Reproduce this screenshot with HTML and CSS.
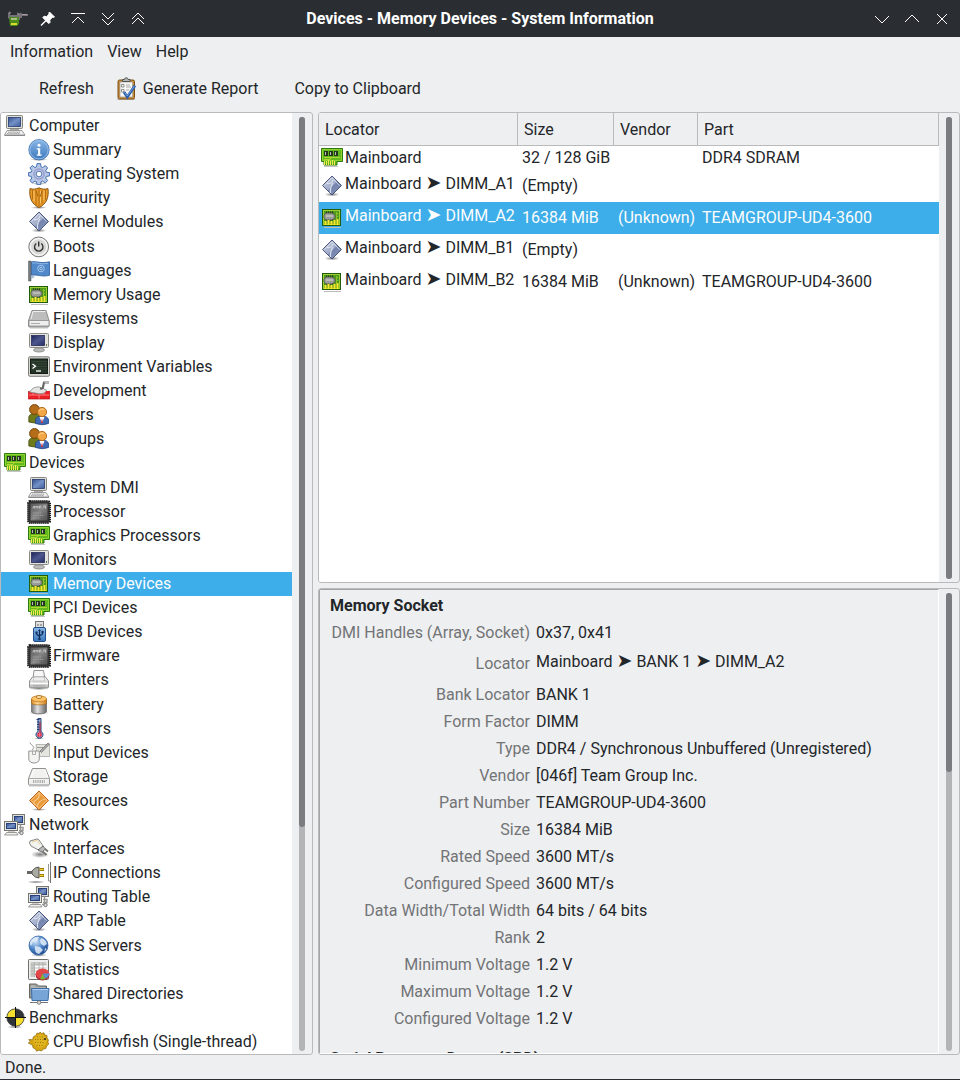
FILE: index.html
```html
<!DOCTYPE html>
<html lang="en">
<head>
<meta charset="utf-8">
<title>Devices - Memory Devices - System Information</title>
<link rel="stylesheet" href="styles.css">
</head>
<body>
<svg class="sprite" width="0" height="0" aria-hidden="true">
  <defs>
    <linearGradient id="g-screen" x1="0" y1="0" x2="1" y2="1"><stop offset="0" stop-color="#34508f"/><stop offset=".5" stop-color="#7391c6"/><stop offset="1" stop-color="#3f5b9b"/></linearGradient>
    <linearGradient id="g-dark" x1="0" y1="0" x2="1" y2="1"><stop offset="0" stop-color="#1d2457"/><stop offset=".5" stop-color="#4d588f"/><stop offset="1" stop-color="#252c66"/></linearGradient>
    <linearGradient id="g-silver" x1="0" y1="0" x2="0" y2="1"><stop offset="0" stop-color="#fafafa"/><stop offset="1" stop-color="#b9bab8"/></linearGradient>
    <linearGradient id="g-blue" x1="0" y1="0" x2="0" y2="1"><stop offset="0" stop-color="#8bb7e6"/><stop offset="1" stop-color="#3b78bd"/></linearGradient>
    <linearGradient id="g-diamond" x1="0" y1="0" x2="1" y2="1"><stop offset="0" stop-color="#c9d0e2"/><stop offset=".5" stop-color="#a3aecb"/><stop offset=".55" stop-color="#7484ad"/><stop offset="1" stop-color="#8997ba"/></linearGradient>
    <linearGradient id="g-metal" x1="0" y1="0" x2="1" y2="0"><stop offset="0" stop-color="#777"/><stop offset=".4" stop-color="#e0e0e0"/><stop offset="1" stop-color="#666"/></linearGradient>
    <linearGradient id="g-gold" x1="0" y1="0" x2="1" y2="0"><stop offset="0" stop-color="#d98b22"/><stop offset=".4" stop-color="#ffd894"/><stop offset="1" stop-color="#cf7f18"/></linearGradient>
    <linearGradient id="g-chip" x1="0" y1="0" x2="1" y2="1"><stop offset="0" stop-color="#555"/><stop offset=".5" stop-color="#858585"/><stop offset="1" stop-color="#4b4b4b"/></linearGradient>
    <radialGradient id="g-globe" cx=".35" cy=".3" r=".8"><stop offset="0" stop-color="#cfe2f6"/><stop offset=".5" stop-color="#4c86c8"/><stop offset="1" stop-color="#173f7f"/></radialGradient>
    <radialGradient id="g-shadow"><stop offset="0" stop-color="#000" stop-opacity=".5"/><stop offset="1" stop-color="#000" stop-opacity="0"/></radialGradient>
  </defs>
  <symbol id="i-computer" viewBox="0 0 22 22">
    <rect x="2.500" y=".5" width="16" height="13" rx="1" fill="#deded9" stroke="#85867f"/>
    <rect x="4.500" y="2.500" width="12" height="9" fill="url(#g-screen)" stroke="#24386f" stroke-width=".8"/>
    <path d="M6 14h9v2H6z" fill="#aaa"/>
    <path d="M3 15.500h15l3 4.500H.5z" fill="#eee" stroke="#888" stroke-width=".8"/>
    <path d="M4 17.200h12M3 18.700h13" stroke="#999" stroke-dasharray="1.500 .6"/>
    <path d="M.5 20.500h20.500" stroke="#777" stroke-width=".8"/>
  </symbol>
  <symbol id="i-info" viewBox="0 0 22 22">
    <ellipse cx="11" cy="20.500" rx="9" ry="1.500" fill="url(#g-shadow)"/>
    <circle cx="11" cy="10.700" r="10.200" fill="url(#g-blue)" stroke="#3c6fae" stroke-width=".8"/>
    <circle cx="11" cy="10.700" r="9.200" fill="none" stroke="#a5c8ee" stroke-width=".8"/>
    <circle cx="11" cy="6.300" r="1.500" fill="#fff"/>
    <path d="M8.800 9.200h3.400v6.300h1.400v1.200H8.800v-1.200h1.300v-5H8.800z" fill="#fff"/>
  </symbol>
  <symbol id="i-gear" viewBox="0 0 22 22">
    <ellipse cx="11" cy="20.500" rx="8" ry="1.500" fill="url(#g-shadow)"/>
    <path d="M9 .6h3.600l.4 3.200 1.600.7 2.700-1.900 2.300 2.300-1.900 2.700.7 1.600 3.200.4v3.300l-3.200.5-.7 1.600 1.900 2.600-2.300 2.300-2.700-1.800-1.600.6-.4 3H9l-.5-3-1.500-.6L4.300 20 2 17.700l1.800-2.700-.6-1.600-2.800-.5V9.600l2.800-.4.6-1.600L2 4.900l2.300-2.300L7 4.500l1.500-.7z" fill="#b7c7e5" stroke="#4270b2"/>
    <circle cx="11" cy="11" r="5" fill="none" stroke="#9a9fce" stroke-width="1.500"/>
    <circle cx="11" cy="11" r="2.800" fill="#fff" stroke="#5779b2"/>
  </symbol>
  <symbol id="i-shield" viewBox="0 0 22 22">
    <ellipse cx="11" cy="20.500" rx="8" ry="1.500" fill="url(#g-shadow)"/>
    <path d="M11 .8c3 1.700 6.200 1.600 9 .8 1 8.500-1.200 15.200-9 18.900C3.200 16.800 1 10.100 2 1.600c2.800.8 6 .9 9-.8z" fill="#e89a28" stroke="#8b5410"/>
    <path d="M4.500 3v9.500M8 3v15M11 2v17M14 3.500V17M17.500 3v10" stroke="#a7640d" stroke-width=".8"/>
    <path d="M6 4v10M12.500 4v12M16 4v9" stroke="#ffc665" stroke-width="1"/>
    <path d="M8 4l2 5M14 4l-2 6" stroke="#905510" stroke-width=".8"/>
  </symbol>
  <symbol id="i-diamond" viewBox="0 0 22 22">
    <ellipse cx="11" cy="19.500" rx="7.500" ry="2" fill="url(#g-shadow)"/>
    <path d="M11 1l9.500 9.500L11 20l-9.500-9.500z" fill="url(#g-diamond)" stroke="#3d4b74" stroke-width=".9"/>
    <path d="M11 3l7.500 7.500M11 3l-7.500 7.500" stroke="#e4e8f2" stroke-width=".7"/>
    <path d="M6 8.500c3 .5 4.500 0 6-3.500M12 8c-2 3-3 6-2.500 10" stroke="#dbe1ee" fill="none" stroke-width="1.200"/>
  </symbol>
  <symbol id="i-power" viewBox="0 0 22 22">
    <circle cx="10.700" cy="10.900" r="9.900" fill="#d8d8d6" stroke="#767876"/>
    <circle cx="10.700" cy="10.900" r="8.400" fill="none" stroke="#f6f6f6" stroke-width="1.400"/>
    <path d="M8.300 7.500a4.200 4.200 0 1 0 4.900 0" fill="none" stroke="#333" stroke-width="1.400"/>
    <path d="M10.700 5.500v5" stroke="#333" stroke-width="1.400"/>
  </symbol>
  <symbol id="i-flag" viewBox="0 0 22 22">
    <path d="M3 2c5-1.500 9 2 18.500-.2v13.500c-8 2.200-13-1.600-18.500.2z" fill="#5088c9" stroke="#2b5c9b" stroke-width=".8"/>
    <circle cx="13" cy="8.500" r="3.300" fill="none" stroke="#a5c6eb"/>
    <circle cx="13" cy="8.500" r="1.300" fill="none" stroke="#bed7f1" stroke-width=".8"/>
    <path d="M.5 1h2.500v20H.5z" fill="#777c80" stroke="#505558" stroke-width=".5"/>
    <path d="M4 3c5-1 9 2 16 .3" fill="none" stroke="#8db8e7"/>
    <path d="M3 19l4-2-4-2z" fill="#a9bdd4"/>
  </symbol>
  <symbol id="i-memory" viewBox="0 0 22 22">
    <path d="M3 20.500h17" stroke="#bbb"/>
    <rect x="1.500" y="2.500" width="18" height="16" fill="#4f9a1a" stroke="#215c0c"/>
    <rect x="2.500" y="3.500" width="16" height="14" fill="none" stroke="#9fd033"/>
    <path d="M5 5.500h7M5 12.500h7" stroke="#222c1c" stroke-width="2" stroke-dasharray="1 1"/>
    <path d="M5 6h6l3 2v3l-3 2H5L3 11V8z" fill="#9a9c97" stroke="#4c5546" stroke-width=".8"/>
    <path d="M5 9h7" stroke="#d9dad6"/>
    <path d="M15 6.500h2M15 9.500h2M15.500 5v7" stroke="#87c22c"/>
    <path d="M4.500 14v4M7.500 13v5M10.500 14v4M13.500 13v5M16.500 12v6" stroke="#ffe62c" stroke-width="2"/>
  </symbol>
  <symbol id="i-drive" viewBox="0 0 22 22">
    <path d="M4 2.500h14l3 10v5.500q0 1-1 1H1.500q-1 0-1-1v-5.500z" fill="#bcbdbc" stroke="#858785" stroke-width=".9"/>
    <path d="M1 12.500h20v5.500H1z" fill="#eee" stroke="#8a8c8a" stroke-width=".8"/>
    <path d="M3 11l2-7.500h12.500" stroke="#eee" fill="none"/>
    <path d="M3 15.500h9" stroke="#aaa"/><path d="M2 20h18" stroke="#aaa" stroke-width=".7"/>
  </symbol>
  <symbol id="i-display" viewBox="0 0 22 22">
    <ellipse cx="11" cy="18" rx="5.500" ry="2" fill="#bbbcb9" stroke="#858683" stroke-width=".8"/>
    <rect x="1.500" y="1.500" width="19" height="14" rx="1" fill="#e2e2df" stroke="#8b8c88"/>
    <rect x="3.500" y="3.500" width="13" height="10" fill="url(#g-dark)" stroke="#252b58" stroke-width=".8"/>
    <path d="M18.500 12v2" stroke="#657747"/>
  </symbol>
  <symbol id="i-terminal" viewBox="0 0 22 22">
    <rect x=".5" y=".8" width="21" height="19.500" rx="1.500" fill="#d5d6d1" stroke="#7d7e79"/>
    <rect x="2.500" y="3" width="17" height="14.500" fill="#233225" stroke="#151d17"/>
    <path d="M3 5.500h16M3 8h16M3 10.500h16M3 13h16" stroke="#405140" stroke-width=".7"/>
    <path d="M4.500 8l3 2.300-3 2.300" fill="none" stroke="#fff" stroke-width="1.300"/><path d="M8 15h5" stroke="#fff" stroke-width="1.300"/>
  </symbol>
  <symbol id="i-trowel" viewBox="0 0 22 22">
    <rect x=".3" y="11" width="21.500" height="8" fill="#ec1f24"/>
    <path d="M.3 15h21.500M5 11v4M16 11v4M11 15v4" stroke="#fb8181"/>
    <path d="M.3 11v8h21.500v-8" fill="none" stroke="#b20f16" stroke-width=".7"/>
    <path d="M1.500 12q4-6 10-5l7 3q-1 4-7 3.800z" fill="#e4e5e3" stroke="#888" stroke-width=".8"/>
    <path d="M12 8.500q3 .5 3-1.500l1-4.500h5" fill="none" stroke="#666" stroke-width="2.200"/>
    <path d="M16.500 2.500h4.500" stroke="#bbb"/>
  </symbol>
  <symbol id="i-users" viewBox="0 0 22 22">
    <path d="M.8 18V13q.5-3.500 6-3.500t6 3.500v5q-6 2-12 0z" fill="#6f7b1b" stroke="#48500e" stroke-width=".8"/>
    <circle cx="6.500" cy="5.500" r="4.900" fill="#b46d18" stroke="#754409"/>
    <path d="M7.500 19.500v-4q1-3.500 6.500-3.500t6.500 3.500v4q-6 2.500-13 0z" fill="#3e69b5" stroke="#24447f" stroke-width=".8"/>
    <path d="M11.500 13l2.500 6 2.500-6z" fill="#fff"/><path d="M14 14l-1 5h2z" fill="#d22c35"/>
    <circle cx="14" cy="8" r="4.600" fill="#f3a646" stroke="#b36b1c"/>
    <path d="M11 7q2-3 5-1.500" fill="none" stroke="#ffd697"/>
  </symbol>
  <symbol id="i-card" viewBox="0 0 22 22">
    <path d="M.5 1.500h21v13H16V18H3v-3.500H.5z" fill="#62b91d" stroke="#2d790d"/>
    <path d="M1.500 2.500h19v11h-19z" fill="none" stroke="#a4df3b" stroke-width=".7"/>
    <path d="M3 4h4v5H3zM8 4h4v5H8zM13 4h4v5h-4z" fill="#24361e"/>
    <path d="M4.500 5v3M9.500 5v3M14.500 5v3" stroke="#b6bdb4"/>
    <path d="M3 10.500h16M3 12.500h6l1-1.500" stroke="#c8dc34" stroke-width=".8" fill="none"/>
    <path d="M3.500 14v4M5.500 14v4M7.500 13v5M9.500 14v4M11.500 13v5M13.500 14v4" stroke="#f6e850"/>
    <path d="M3 19.500h14" stroke="#aaa" stroke-width=".7"/>
  </symbol>
  <symbol id="i-cpu" viewBox="0 0 24 24">
    <rect x="1.300" y="1.300" width="21.500" height="21.500" rx="2" fill="#444" stroke="#171717" stroke-width="2.500" stroke-dasharray="1.200 .8"/>
    <rect x="3" y="3" width="18" height="18" rx="1.500" fill="url(#g-chip)" stroke="#303030"/>
    <path d="M6 8.500V7l1.500-1v2.500M9 8.500V6l1 1.500L11 6v2.500M12.500 8.500V6h1.500v2.500M16 6h2.500v2.500M16 8.500l2-2" fill="none" stroke="#c5c5c5" stroke-width=".9"/>
    <path d="M6 13h8M6 15.500h10M6 18h7" stroke="#aaa" stroke-width=".8" stroke-dasharray="1.500 .7"/>
  </symbol>
  <symbol id="i-usb" viewBox="0 0 22 22">
    <rect x="7.500" y=".5" width="8" height="7" fill="#e1e1df" stroke="#777"/>
    <path d="M9.500 3h1v2h-1zM12.500 3h1v2h-1z" fill="#666"/>
    <rect x="5.500" y="6.500" width="12" height="14" rx="1.500" fill="url(#g-blue)" stroke="#214f8b"/>
    <path d="M11.500 18V9M8.500 11.500V13l3 2.500M14.500 11v2l-3 2" fill="none" stroke="#112e5d" stroke-width="1.200"/>
    <circle cx="11.500" cy="18" r="1.300" fill="#112e5d"/><path d="M10 10l1.500-2 1.500 2zM7.500 10.500h2v2h-2z" fill="#112e5d"/><circle cx="14.500" cy="11" r="1.200" fill="#112e5d"/>
  </symbol>
  <symbol id="i-printer" viewBox="0 0 22 22">
    <ellipse cx="11" cy="19.500" rx="10" ry="1.600" fill="url(#g-shadow)"/>
    <path d="M5 10l1-8.500h9.500L17 10z" fill="#f7f7f7" stroke="#888" stroke-width=".9"/>
    <path d="M4.500 8h13l3 4v6q0 .8-1 .8h-17q-1 0-1-.8v-6z" fill="url(#g-silver)" stroke="#858683" stroke-width=".9"/>
    <path d="M6 8l-1 4h12l-1-4z" fill="#eee" stroke="#aaa" stroke-width=".6"/>
    <path d="M2 14.500h18" stroke="#fff" stroke-width="1.300"/><path d="M5 16.800h12" stroke="#999" stroke-width=".7"/>
  </symbol>
  <symbol id="i-battery" viewBox="0 0 22 22">
    <ellipse cx="11" cy="18.500" rx="10" ry="2.500" fill="url(#g-shadow)"/>
    <path d="M3.500 5.500v12c0 3 15 3 15 0v-12z" fill="url(#g-metal)" stroke="#666" stroke-width=".7"/>
    <path d="M3.500 5v4c0 2.500 15 2.500 15 0V5z" fill="url(#g-gold)" stroke="#a66b1c" stroke-width=".7"/>
    <ellipse cx="11" cy="4.800" rx="7.500" ry="3" fill="#ffc365" stroke="#b97822" stroke-width=".8"/>
    <ellipse cx="11" cy="3" rx="2.800" ry="1.500" fill="#ffe0a7" stroke="#a66b1c" stroke-width=".8"/>
  </symbol>
  <symbol id="i-thermo" viewBox="0 0 22 22">
    <ellipse cx="11" cy="20.500" rx="5" ry="1" fill="url(#g-shadow)"/>
    <path d="M10 .5h3v13a3.500 3.500 0 1 1-3 0z" fill="#9fb4dc" stroke="#24447b"/>
    <path d="M12 4v11" stroke="#b5213c" stroke-width="1.200"/>
    <path d="M8.500 1.500h3M9 4h2.500M9 6.500h2.500M9 9h2.500M9 11.500h2.500" stroke="#223d70"/>
    <circle cx="11.500" cy="16.800" r="2.300" fill="#e51e35"/><path d="M11.500 14.800v4M9.500 16.800h4" stroke="#ff8793" stroke-width=".7"/>
  </symbol>
  <symbol id="i-input" viewBox="0 0 22 22">
    <path d="M8 2.500h13.500v12H9z" fill="#e4e5df" stroke="#b0b1a9" stroke-width=".9"/>
    <path d="M12 9l8-8 1.500 1-8 8.500z" fill="#aaa" stroke="#676767" stroke-width=".7"/>
    <path d="M4.500 8Q7 5 4.500 3.500T2 .5M9 5.500h6" fill="none" stroke="#999"/>
    <path d="M.8 9h10.500v8q-.5 4-5.200 4T.8 17z" fill="#f3f3f2" stroke="#888" stroke-width=".9"/>
    <path d="M4.500 9v3.500h3V9" fill="none" stroke="#999" stroke-width=".8"/>
  </symbol>
  <symbol id="i-storage" viewBox="0 0 22 22">
    <path d="M4.500 2.500h13l4 10V18q0 1-1 1h-19q-1 0-1-1v-5.500z" fill="#f2f2f1" stroke="#858785" stroke-width=".9"/>
    <path d="M1 12.500h20" stroke="#aaa"/><path d="M5 15.500h12" stroke="#aaa" stroke-width="3" stroke-dasharray="1 .8"/>
    <path d="M3 11.500l3-8M17 3.500l3 8" stroke="#fff"/><path d="M1 20h20" stroke="#aaa" stroke-width=".7"/>
  </symbol>
  <symbol id="i-resources" viewBox="0 0 22 22">
    <ellipse cx="11" cy="19.500" rx="8" ry="1.500" fill="url(#g-shadow)"/>
    <path d="M11 1l9.500 9.500L11 20l-9.500-9.500z" fill="#e99b3a" stroke="#bf6417" stroke-width="1"/>
    <path d="M11 2.500l8 8-8 8-8-8z" fill="none" stroke="#ffd39a" stroke-width=".8"/>
    <path d="M11 2.500Q12 8 8 10t-1 5M9 17q1-7 9-8" fill="none" stroke="#f8c78c" stroke-width="1.200"/>
  </symbol>
  <symbol id="i-network" viewBox="0 0 22 22">
    <rect x="8.500" y=".5" width="12" height="10" fill="#ddddda" stroke="#777973"/><rect x="10.500" y="2.500" width="8" height="6" fill="url(#g-screen)" stroke="#28417a"/>
    <path d="M16.500 10.500v9M15 13.500h4v3h-4M14 18.500h5" fill="none" stroke="#969895" stroke-width="1.400"/>
    <rect x=".5" y="7.500" width="13" height="9" fill="#e8e8e4" stroke="#74766f"/><rect x="2.500" y="9.500" width="9" height="5" fill="url(#g-screen)" stroke="#28417a"/>
    <path d="M4 17h7v1.500H4z" fill="#ccc"/><path d="M2.500 18.500h10l1.500 2.500H.5z" fill="#eee" stroke="#84857f" stroke-width=".8"/>
    <circle cx="17.500" cy="19" r="1.700" fill="#ddd" stroke="#777"/>
  </symbol>
  <symbol id="i-plug" viewBox="0 0 22 22">
    <ellipse cx="12" cy="16.500" rx="9" ry="3.500" fill="url(#g-shadow)"/>
    <path d="M2 3l7-2q1 0 2 1l4.500 6.500-5 3.500L3 8Q.5 5 2 3z" fill="#f3f3f0" stroke="#777873" stroke-width=".9"/>
    <path d="M10 12l5-4 2.500 3-3.500 3z" fill="#bbb" stroke="#555" stroke-width=".8"/>
    <path d="M14.500 13.500l4 3.500M17 11l3 2.500" stroke="#74756f" stroke-width="1.800"/><path d="M4 4l5-1.500 3 4" fill="none" stroke="#e6c26f" stroke-width=".7"/>
  </symbol>
  <symbol id="i-socket" viewBox="0 0 24 22">
    <ellipse cx="9" cy="20" rx="9" ry="1.600" fill="url(#g-shadow)"/>
    <path d="M0 10.500h6" stroke="#666963" stroke-width="3"/><path d="M5 9q3-4 7-4v11q-4 0-7-4z" fill="#a8aaa3" stroke="#54564f"/>
    <path d="M12.500 7.500h4.500M12.500 13.500h4.500" stroke="#9a7a00" stroke-width="3"/><path d="M13 7.500h3.500M13 13.500h3.500" stroke="#f4d535"/>
    <path d="M21.500 2v17h2" fill="none" stroke="#999"/><path d="M23.500 0v21" stroke="#777"/>
  </symbol>
  <symbol id="i-globe" viewBox="0 0 22 22">
    <ellipse cx="11" cy="20" rx="8" ry="1.800" fill="url(#g-shadow)"/>
    <circle cx="10.500" cy="10.500" r="9.500" fill="url(#g-globe)" stroke="#386aa9" stroke-width=".8"/>
    <path d="M3 5q4-4 8-3l-2 4-4 1-2 4q-2-3 0-6zM13 3q5 1 6 6l-3 2-3-2-1-3zM7 11l5 1 3 3-4 4q-5-1-4-8zM17 13l1.500 1-2 3z" fill="#e4effa" opacity=".85"/>
  </symbol>
  <symbol id="i-stats" viewBox="0 0 22 22">
    <rect x=".5" y=".5" width="20" height="20" rx=".8" fill="#eee" stroke="#6e706a"/>
    <path d="M2.500 3h16v15h-16z" fill="#fff"/><path d="M2.500 3h16v3h-16zM2.500 3h4v15h-4z" fill="#c8cac6"/>
    <path d="M2.500 6h16M2.500 9h16M2.500 12h16M2.500 15h16M6.500 3v15M11 3v15M15 3v15" stroke="#aaaca8" stroke-width=".8"/>
    <ellipse cx="14.500" cy="15.800" rx="7" ry="5.700" fill="#aa1824"/><ellipse cx="14.500" cy="14.700" rx="6.700" ry="5.200" fill="#e2474a"/>
    <path d="M14.500 14.700l6.700-.5q0 4-4 5.500z" fill="#5a8ed0"/><path d="M14.500 14.700l2.700 5.300q-3 1-5 0z" fill="#78b638"/>
  </symbol>
  <symbol id="i-folder" viewBox="0 0 22 22">
    <path d="M1.500 1h7l2 2h8v12h-17z" fill="#9b9c99" stroke="#656763"/>
    <path d="M3 3h4M3 5h14" stroke="#ccc"/>
    <path d="M3.500 5.500h17.500l-1 12h-16z" fill="#77a5d8" stroke="#3c6ea9"/><path d="M4.500 6.500h15.500" stroke="#b0cff0"/>
    <path d="M2 19.500h18M11 17.500v2" stroke="#777" stroke-width="1.200"/><circle cx="11" cy="19.500" r="1.800" fill="#ddd" stroke="#666" stroke-width=".8"/>
  </symbol>
  <symbol id="i-bench" viewBox="0 0 22 22">
    <ellipse cx="11" cy="20" rx="8" ry="1.500" fill="url(#g-shadow)"/>
    <circle cx="11.500" cy="10.500" r="8.700" fill="#2f3438"/><path d="M11.500 10.500V1.800a8.700 8.700 0 0 0-8.700 8.700zM11.500 10.500v8.700a8.700 8.700 0 0 0 8.700-8.700z" fill="#f5df2e"/>
    <circle cx="11.500" cy="10.500" r="8.700" fill="none" stroke="#444" stroke-width=".8"/><path d="M11.500 0v21M1 10.500h21" stroke="#111"/>
  </symbol>
  <symbol id="i-blowfish" viewBox="0 0 22 22">
    <path d="M12 1l1.500 1.500 2.500-.7.500 2 2.500.7v2.500l1.500 2-.7 2 1 2-2.200 2-.8 2.500-2.300.5-2 2-2.500-.8-2.500 1-1-2.200-2.500-1.300-.5-2.500L.3 12l2-1.500-1.500-2 3.700.2 1-3L8 4.500 9 2l2 .7z" fill="#d5a512" stroke="#8b6508" stroke-width=".7"/>
    <circle cx="12" cy="10" r="6.500" fill="#e0b41e"/><path d="M7 8.500h10M7 11.500h10M8.500 14.500h7M9 6h6" stroke="#9b7209" stroke-dasharray="1 1.500"/>
    <circle cx="17" cy="8" r="1" fill="#222"/><path d="M22 0v1M22 2v1" stroke="#999"/>
  </symbol>
  <symbol id="i-clipboard" viewBox="0 0 22 24">
    <path d="M1 22.500h18" stroke="#999" opacity=".5"/>
    <rect x="2" y="3" width="16.500" height="19" rx="1.500" fill="#c98d3a" stroke="#7c4e16"/>
    <path d="M4 5h12.500v15H4z" fill="#f8f8f6" stroke="#999" stroke-width=".7"/>
    <path d="M6.500 4.500v-2h2Q8.500.8 10.300.8t1.800 1.700h2v2z" fill="#b3b5b0" stroke="#555752"/>
    <path d="M5.500 7.500h2.500V10H5.500zM5.500 12.500h2.500V15H5.500z" fill="#fff" stroke="#707570" stroke-width=".8"/><path d="M10 8h4M10 10h5M10 13h3" stroke="#aaa"/>
    <path d="M8 15l3.300 5L19 8.500" fill="none" stroke="#2d5fa8" stroke-width="2.800"/><path d="M8.500 15.500l2.800 3.500L18.500 9" fill="none" stroke="#6d9fe0"/>
  </symbol>
  <symbol id="i-app" viewBox="0 0 22 18">
    <path d="M1 3l2-2v4h7V2l2 2h1l1-2 1 2h6v2h-6v2h-2v2H3L1 8z" fill="#77717c"/>
    <path d="M3 2v2M11 4h2M15 4.500h5" stroke="#a99a9f"/>
    <path d="M2 7h10v7l-2 2H3z" fill="#4c8c1c"/>
    <path d="M4 8h6v2H4z" fill="#a9bb86"/><path d="M4 13h6v2H4z" fill="#d8db2c"/>
  </symbol>
</svg>

<div class="window">
  <header class="titlebar">
    <div class="titlebar-group">
      <button class="title-button" aria-label="Application menu"><svg class="app-icon"><use href="#i-app"/></svg></button>
      <button class="title-button" aria-label="Pin"><svg class="glyph" viewBox="0 0 16 16"><path d="M9.500 1l5 5-1.300.5-.7-.3-2.800 2.800.4 2.300-1.300 1.300-6-6L4 5.200l2.500.5L9.200 3l-.4-1z" fill="#fff"/><path d="M6 9.500l-5 5" stroke="#fff" stroke-width="1.500"/></svg></button>
      <button class="title-button" aria-label="Shade"><svg class="glyph" viewBox="0 0 16 16"><path d="M1 2.500h14M2 12l6-6 6 6"/></svg></button>
      <button class="title-button" aria-label="Keep below"><svg class="glyph" viewBox="0 0 16 16"><path d="M2 2l6 6 6-6M2 8l6 6 6-6"/></svg></button>
      <button class="title-button" aria-label="Keep above"><svg class="glyph" viewBox="0 0 16 16"><path d="M2 8l6-6 6 6M2 13l6-6 6 6"/></svg></button>
    </div>
    <h1 class="window-title">Devices - Memory Devices - System Information</h1>
    <div class="titlebar-group titlebar-end">
      <button class="title-button" aria-label="Minimize"><svg class="glyph" viewBox="0 0 16 16"><path d="M1 5l7 7 7-7"/></svg></button>
      <button class="title-button" aria-label="Maximize"><svg class="glyph" viewBox="0 0 16 16"><path d="M1 11l7-7 7 7"/></svg></button>
      <button class="title-button" aria-label="Close"><svg class="glyph" viewBox="0 0 16 16"><path d="M3 3l10 10M13 3L3 13"/></svg></button>
    </div>
  </header>

  <nav class="menubar"><button>Information</button><button>View</button><button>Help</button></nav>
  <div class="toolbar">
    <button><span class="blank-icon"></span>Refresh</button>
    <button><svg class="tool-icon"><use href="#i-clipboard"/></svg>Generate Report</button>
    <button><span class="blank-icon"></span>Copy to Clipboard</button>
  </div>

  <main class="workspace">
    <nav class="panel" aria-label="Modules">
      <ul class="tree">
        <li><a href="#"><svg><use href="#i-computer"/></svg>Computer</a></li>
        <li class="child"><a href="#"><svg><use href="#i-info"/></svg>Summary</a></li>
        <li class="child"><a href="#"><svg><use href="#i-gear"/></svg>Operating System</a></li>
        <li class="child"><a href="#"><svg><use href="#i-shield"/></svg>Security</a></li>
        <li class="child"><a href="#"><svg><use href="#i-diamond"/></svg>Kernel Modules</a></li>
        <li class="child"><a href="#"><svg><use href="#i-power"/></svg>Boots</a></li>
        <li class="child"><a href="#"><svg><use href="#i-flag"/></svg>Languages</a></li>
        <li class="child"><a href="#"><svg><use href="#i-memory"/></svg>Memory Usage</a></li>
        <li class="child"><a href="#"><svg><use href="#i-drive"/></svg>Filesystems</a></li>
        <li class="child"><a href="#"><svg><use href="#i-display"/></svg>Display</a></li>
        <li class="child"><a href="#"><svg><use href="#i-terminal"/></svg>Environment Variables</a></li>
        <li class="child"><a href="#"><svg><use href="#i-trowel"/></svg>Development</a></li>
        <li class="child"><a href="#"><svg><use href="#i-users"/></svg>Users</a></li>
        <li class="child"><a href="#"><svg><use href="#i-users"/></svg>Groups</a></li>
        <li><a href="#"><svg><use href="#i-card"/></svg>Devices</a></li>
        <li class="child"><a href="#"><svg><use href="#i-computer"/></svg>System DMI</a></li>
        <li class="child"><a href="#"><svg class="wide-icon"><use href="#i-cpu"/></svg>Processor</a></li>
        <li class="child"><a href="#"><svg><use href="#i-card"/></svg>Graphics Processors</a></li>
        <li class="child"><a href="#"><svg><use href="#i-display"/></svg>Monitors</a></li>
        <li class="child selected"><a href="#" aria-current="page"><svg><use href="#i-memory"/></svg>Memory Devices</a></li>
        <li class="child"><a href="#"><svg><use href="#i-card"/></svg>PCI Devices</a></li>
        <li class="child"><a href="#"><svg><use href="#i-usb"/></svg>USB Devices</a></li>
        <li class="child"><a href="#"><svg class="wide-icon"><use href="#i-cpu"/></svg>Firmware</a></li>
        <li class="child"><a href="#"><svg><use href="#i-printer"/></svg>Printers</a></li>
        <li class="child"><a href="#"><svg><use href="#i-battery"/></svg>Battery</a></li>
        <li class="child"><a href="#"><svg><use href="#i-thermo"/></svg>Sensors</a></li>
        <li class="child"><a href="#"><svg><use href="#i-input"/></svg>Input Devices</a></li>
        <li class="child"><a href="#"><svg><use href="#i-storage"/></svg>Storage</a></li>
        <li class="child"><a href="#"><svg><use href="#i-resources"/></svg>Resources</a></li>
        <li><a href="#"><svg><use href="#i-network"/></svg>Network</a></li>
        <li class="child"><a href="#"><svg><use href="#i-plug"/></svg>Interfaces</a></li>
        <li class="child"><a href="#"><svg class="wide-icon"><use href="#i-socket"/></svg>IP Connections</a></li>
        <li class="child"><a href="#"><svg><use href="#i-network"/></svg>Routing Table</a></li>
        <li class="child"><a href="#"><svg><use href="#i-diamond"/></svg>ARP Table</a></li>
        <li class="child"><a href="#"><svg><use href="#i-globe"/></svg>DNS Servers</a></li>
        <li class="child"><a href="#"><svg><use href="#i-stats"/></svg>Statistics</a></li>
        <li class="child"><a href="#"><svg><use href="#i-folder"/></svg>Shared Directories</a></li>
        <li><a href="#"><svg><use href="#i-bench"/></svg>Benchmarks</a></li>
        <li class="child"><a href="#"><svg><use href="#i-blowfish"/></svg>CPU Blowfish (Single-thread)</a></li>
      </ul>
      <div class="scrollbar"><div class="track"><div class="thumb" style="height:76%"></div></div></div>
    </nav>

    <div class="content">
      <section class="panel">
        <div class="list">
          <table class="devices">
            <colgroup><col class="col-locator"><col class="col-size"><col class="col-vendor"><col></colgroup>
            <thead><tr><th>Locator</th><th>Size</th><th>Vendor</th><th>Part</th></tr></thead>
            <tbody>
              <tr class="root"><td><span class="locator"><svg><use href="#i-card"/></svg>Mainboard</span></td><td>32 / 128 GiB</td><td></td><td>DDR4 SDRAM</td></tr>
              <tr><td><span class="locator"><svg><use href="#i-diamond"/></svg><span class="path">Mainboard <span class="arrow">➤</span> DIMM_A1</span></span></td><td>(Empty)</td><td></td><td></td></tr>
              <tr class="selected"><td><span class="locator"><svg><use href="#i-memory"/></svg><span class="path">Mainboard <span class="arrow">➤</span> DIMM_A2</span></span></td><td>16384 MiB</td><td>(Unknown)</td><td>TEAMGROUP-UD4-3600</td></tr>
              <tr><td><span class="locator"><svg><use href="#i-diamond"/></svg><span class="path">Mainboard <span class="arrow">➤</span> DIMM_B1</span></span></td><td>(Empty)</td><td></td><td></td></tr>
              <tr><td><span class="locator"><svg><use href="#i-memory"/></svg><span class="path">Mainboard <span class="arrow">➤</span> DIMM_B2</span></span></td><td>16384 MiB</td><td>(Unknown)</td><td>TEAMGROUP-UD4-3600</td></tr>
            </tbody>
          </table>
        </div>
        <div class="scrollbar"><div class="track"><div class="thumb" style="height:100%"></div></div></div>
      </section>

      <section class="panel">
        <div class="details">
          <h2>Memory Socket</h2>
          <dl>
            <dt>DMI Handles (Array, Socket)</dt><dd>0x37, 0x41</dd>
            <dt class="tall">Locator</dt><dd class="tall path">Mainboard <span class="arrow">➤</span> BANK 1 <span class="arrow">➤</span> DIMM_A2</dd>
            <dt>Bank Locator</dt><dd>BANK 1</dd>
            <dt>Form Factor</dt><dd>DIMM</dd>
            <dt>Type</dt><dd>DDR4 / Synchronous Unbuffered (Unregistered)</dd>
            <dt>Vendor</dt><dd>[046f] Team Group Inc.</dd>
            <dt>Part Number</dt><dd>TEAMGROUP-UD4-3600</dd>
            <dt>Size</dt><dd>16384 MiB</dd>
            <dt>Rated Speed</dt><dd>3600 MT/s</dd>
            <dt>Configured Speed</dt><dd>3600 MT/s</dd>
            <dt>Data Width/Total Width</dt><dd>64 bits / 64 bits</dd>
            <dt>Rank</dt><dd>2</dd>
            <dt>Minimum Voltage</dt><dd>1.2 V</dd>
            <dt>Maximum Voltage</dt><dd>1.2 V</dd>
            <dt>Configured Voltage</dt><dd>1.2 V</dd>
          </dl>
          <h2>Serial Presence Detect (SPD)</h2>
        </div>
        <div class="scrollbar"><div class="track"><div class="thumb" style="height:39%"></div></div></div>
      </section>
    </div>
  </main>
  <footer class="statusbar">Done.</footer>
</div>
</body>
</html>
```
FILE: styles.css
```css
* { box-sizing: border-box; }

body, h1, h2, ul, dl, dd { margin: 0; padding: 0; }

body {
  background: #eeeff1;
  color: #232629;
  font: 16px/20px Roboto, "DejaVu Sans", sans-serif;
}

button {
  border: 0;
  padding: 0;
  background: none;
  color: inherit;
  font: inherit;
}

svg { flex: none; }
.sprite { position: absolute; }

.window {
  display: flex;
  flex-direction: column;
  height: 100vh;
  border-bottom: 1px solid #2a2e32;
}

/* Title bar */
.titlebar {
  flex: none;
  display: grid;
  grid-template-columns: 1fr auto 1fr;
  align-items: center;
  height: 37px;
  padding: 0 3px;
  background: #2a2e32;
  color: #fff;
}
.titlebar-group { display: flex; }
.titlebar-end { justify-content: flex-end; }
.title-button {
  display: flex;
  align-items: center;
  justify-content: center;
  width: 30px;
  height: 30px;
}
.app-icon { width: 22px; height: 18px; }
.glyph { width: 16px; height: 16px; fill: none; stroke: #fcfcfc; }
.window-title { font-size: 16px; line-height: 20px; font-weight: 700; }

/* Menu and tool bars */
.menubar { flex: none; display: flex; height: 29px; padding: 0 3px; }
.menubar button { padding: 0 7px; }
.toolbar { flex: none; display: flex; height: 46px; padding: 0 14px; }
.toolbar button { display: flex; align-items: center; gap: 5px; padding: 0 11px; }
.tool-icon { width: 22px; height: 24px; }
.blank-icon { width: 9px; }

/* Panels */
.workspace {
  flex: 1;
  min-height: 0;
  display: grid;
  grid-template-columns: 313px 1fr;
  gap: 5px;
}
.content {
  display: grid;
  grid-template-rows: 471fr 467fr;
  gap: 5px;
  min-width: 0;
  min-height: 0;
}
.panel {
  display: grid;
  grid-template-columns: 1fr 20px;
  min-height: 0;
  border: 1px solid #b9babc;
  border-radius: 3px;
  overflow: hidden;
}
.scrollbar { display: flex; justify-content: center; padding: 4px 0 3px; }
.track { width: 6px; border-radius: 3px; background: #b3b4b6; }
.thumb { border-radius: 3px; background: #7b7c7f; }

/* Module tree */
.tree {
  display: grid;
  grid-auto-rows: 1fr;
  padding-top: 1px;
  background: #fff;
  list-style: none;
}
.tree a {
  display: flex;
  align-items: center;
  gap: 3px;
  height: 100%;
  padding-left: 3px;
  color: inherit;
  text-decoration: none;
}
.tree .child a { padding-left: 27px; }
.tree svg, .locator svg { width: 22px; height: 22px; }
.tree .wide-icon { width: 24px; height: 24px; margin: 0 -1px; }
.selected { background: #3daee9; color: #fcfcfc; }

/* Device list */
.list { background: #fff; min-width: 0; overflow: hidden; }
.devices { width: 100%; table-layout: fixed; border-collapse: separate; border-spacing: 0; }
.col-locator { width: 199px; }
.col-size { width: 96px; }
.col-vendor { width: 84px; }
.devices th {
  height: 33px;
  padding: 2px 6px 0;
  border-right: 1px solid #b9babc;
  border-bottom: 1px solid #b9babc;
  background: #eeeff1;
  font-weight: 400;
  text-align: left;
}
.devices td { height: 32px; padding: 0 4px; white-space: nowrap; }
.devices td:first-child { padding: 0 2px; }
.devices .root td { height: 24px; }
.locator { display: flex; align-items: center; gap: 2px; }
.path { padding-bottom: 4px; }
.arrow { font-size: 19px; line-height: 16px; }

/* Details */
.details {
  min-width: 0;
  min-height: 0;
  padding: 2px 10px;
  border: 1px solid #fff;
  border-top-color: #a3a4a6;
  border-left-color: #a3a4a6;
  overflow: hidden;
}
.details h2 { font-size: 16px; line-height: 27px; font-weight: 700; }
.details dl {
  display: grid;
  grid-template-columns: 200px 1fr;
  column-gap: 6px;
  margin-bottom: 13px;
  line-height: 27px;
}
.details dt { color: #727476; text-align: right; }
.details .tall { line-height: 35px; }
.details .path { line-height: 31px; }
.details .arrow { line-height: 16px; }

.statusbar { flex: none; height: 24px; padding: 3px 5px 1px; }
```
